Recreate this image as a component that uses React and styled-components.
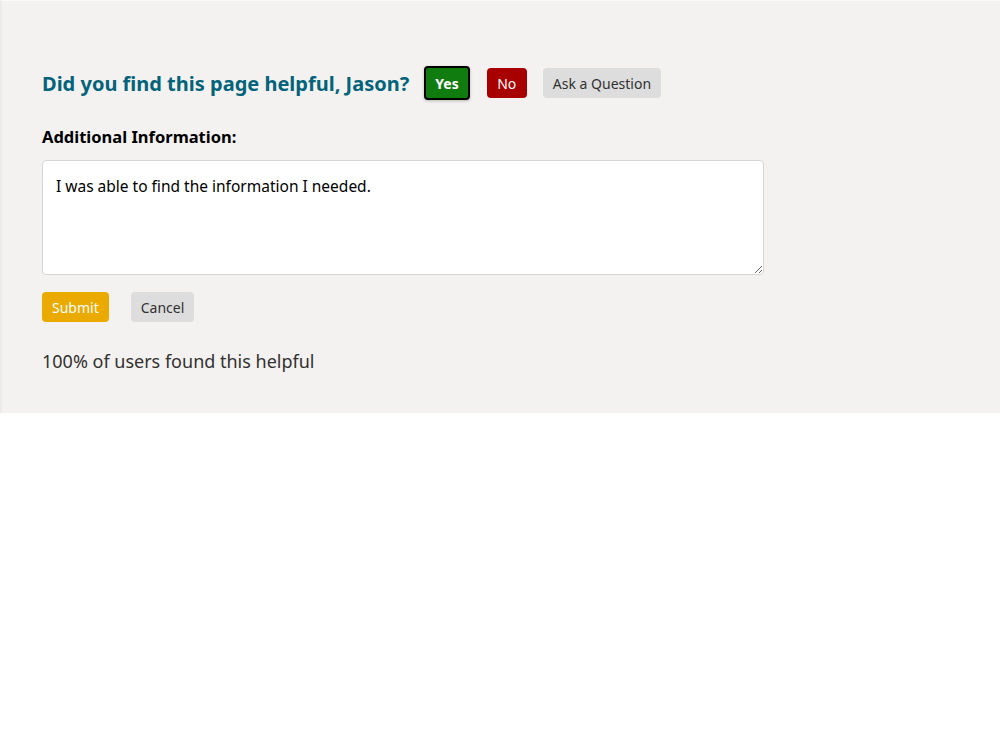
import React from 'react'
import styled, { createGlobalStyle } from 'styled-components'

const GlobalStyle = createGlobalStyle`
  body {
    margin: 0;
    background: #ffffff;
    font-family: "Noto Sans", "Open Sans", sans-serif;
  }
`

export default function App() {
  return (
    <>
      <GlobalStyle />
      <Panel>
        <QuestionRow>
          <Heading>Did you find this page helpful, Jason?</Heading>
          <Button variant="yes">Yes</Button>
          <Button variant="no">No</Button>
          <Button variant="plain">Ask a Question</Button>
        </QuestionRow>

        <Label htmlFor="info">Additional Information:</Label>
        <TextArea id="info" defaultValue="I was able to find the information I needed." />

        <ActionRow>
          <Button variant="submit">Submit</Button>
          <Button variant="plain">Cancel</Button>
        </ActionRow>

        <Stat>100% of users found this helpful</Stat>
      </Panel>
    </>
  )
}

const colors = {
  yes: { bg: '#107c10', fg: '#ffffff' },
  no: { bg: '#a80000', fg: '#ffffff' },
  submit: { bg: '#eaaa00', fg: '#ffffff' },
  plain: { bg: '#dddddd', fg: '#323130' },
}

const Panel = styled.div`
  display: flex;
  flex-direction: column;
  align-items: flex-start;
  background-color: #f3f2f1;
  border-top: 1px solid #f8f8f8;
  border-left: 2px solid #ebebeb;
  padding: 65px 40px 40px;
`

const QuestionRow = styled.div`
  display: flex;
  align-items: center;
  gap: 16px;
`

const Heading = styled.h2`
  margin: 0 1px 0 0;
  font-size: 20px;
  font-weight: 700;
  color: #03637a;
`

const Button = styled.button`
  display: flex;
  align-items: center;
  justify-content: center;
  height: 30px;
  padding: 0 10px;
  border: none;
  border-radius: 4px;
  font-family: inherit;
  font-size: 14px;
  font-weight: 400;
  background-color: ${(p) => colors[p.variant].bg};
  color: ${(p) => colors[p.variant].fg};
  cursor: pointer;

  ${(p) =>
    p.variant === 'yes' &&
    `
    height: 34px;
    padding: 0 9px;
    border: 2px solid #000000;
    font-weight: 700;
    margin: 0 1px 0 -2px;
    box-shadow: 0 1px 3px rgba(0, 0, 0, 0.25);
  `}

  ${(p) => p.variant === 'no' && `padding: 0 10.5px;`}
`

const Label = styled.label`
  margin-top: 25px;
  font-size: 16.5px;
  font-weight: 700;
  color: #000000;
`

const TextArea = styled.textarea`
  box-sizing: border-box;
  width: 722px;
  height: 115px;
  margin-top: 12px;
  padding: 14px 13px;
  border: 1px solid #d6d6d6;
  border-radius: 4px;
  background: #ffffff;
  font-family: inherit;
  font-size: 15.5px;
  color: #000000;
  resize: vertical;
  outline: none;
`

const ActionRow = styled.div`
  display: flex;
  gap: 22px;
  margin-top: 17px;
`

const Stat = styled.p`
  margin: 27px 0 0;
  font-size: 18px;
  color: #323130;
`
